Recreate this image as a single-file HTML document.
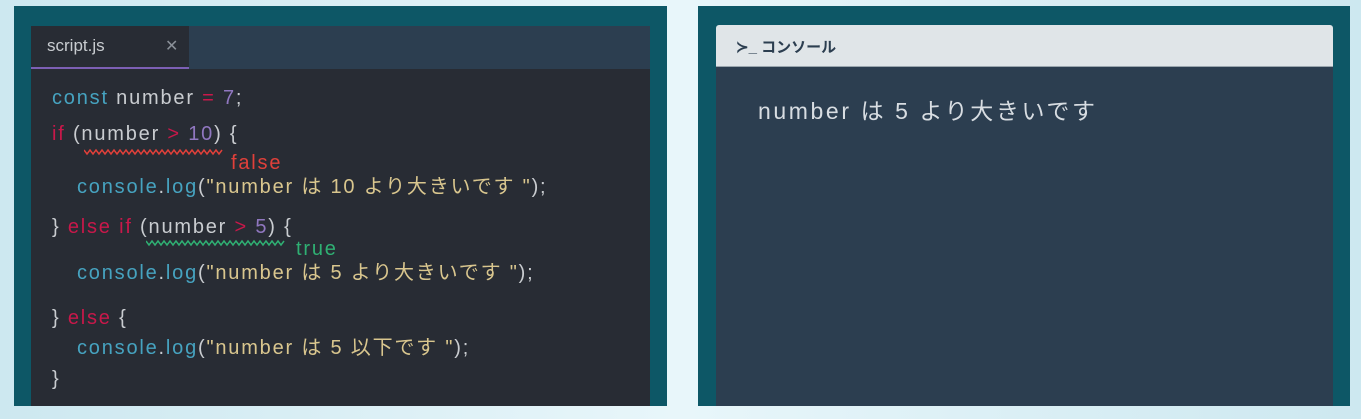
<!DOCTYPE html>
<html><head><meta charset="utf-8"><style>
body{margin:0;width:1361px;height:419px;overflow:hidden;background:linear-gradient(90deg,#cde8f0,#e8f6fa 50%,#cde8f0);font-family:"Liberation Sans","Noto Sans CJK JP",sans-serif;position:relative}
.teal{position:absolute;background:#0d5766;top:6px;height:400px}
.ed{position:absolute;left:31px;top:26px;width:619px;height:380px;background:#282c34}
.tabbar{position:absolute;left:0;top:0;width:619px;height:43px;background:#2c3e50}
.tab{position:absolute;left:0;top:0;width:158px;height:41px;background:#282c34;border-bottom:2px solid #7c5fb4;color:#c8ccd0;font-size:17px}
.l{position:absolute;font-size:20px;letter-spacing:1.8px;white-space:pre;color:#c9ccd0;line-height:24px}
.c{color:#46a3c0}.k{color:#c8184a}.n{color:#9077c0}.s{color:#d9c68e}
</style></head><body>
<div class="teal" style="left:14px;width:653px"></div>
<div class="teal" style="left:698px;width:652px"></div>
<div class="ed">
<div class="tabbar"></div>
<div class="tab"><span style="position:absolute;left:16px;top:10px">script.js</span><span style="position:absolute;left:134px;top:10px;color:#8a9098;font-size:16px">✕</span></div>
</div>
<div class="l" style="left:52px;top:86px"><span class="c">const</span> number <span class="k">=</span> <span class="n">7</span>;</div>
<div class="l" style="left:52px;top:122px"><span class="k">if</span> (number <span class="k">&gt;</span> <span class="n">10</span>) {</div>
<svg style="position:absolute;left:84px;top:148px" width="140" height="8"><polyline fill="none" stroke="#e0403a" stroke-width="1.5" points="0,2 3,6 6,2 9,6 12,2 15,6 18,2 21,6 24,2 27,6 30,2 33,6 36,2 39,6 42,2 45,6 48,2 51,6 54,2 57,6 60,2 63,6 66,2 69,6 72,2 75,6 78,2 81,6 84,2 87,6 90,2 93,6 96,2 99,6 102,2 105,6 108,2 111,6 114,2 117,6 120,2 123,6 126,2 129,6 132,2 135,6 138,2"/></svg>
<div class="l" style="left:231px;top:151px;color:#e0403a">false</div>
<div class="l" style="left:77px;top:175px"><span class="c">console</span>.<span class="c">log</span>(<span class="s">"number は 10 より大きいです "</span>);</div>
<div class="l" style="left:52px;top:215px">} <span class="k">else if</span> (number <span class="k">&gt;</span> <span class="n">5</span>) {</div>
<svg style="position:absolute;left:146px;top:239px" width="140" height="8"><polyline fill="none" stroke="#2fb073" stroke-width="1.5" points="0,2 3,6 6,2 9,6 12,2 15,6 18,2 21,6 24,2 27,6 30,2 33,6 36,2 39,6 42,2 45,6 48,2 51,6 54,2 57,6 60,2 63,6 66,2 69,6 72,2 75,6 78,2 81,6 84,2 87,6 90,2 93,6 96,2 99,6 102,2 105,6 108,2 111,6 114,2 117,6 120,2 123,6 126,2 129,6 132,2 135,6 138,2"/></svg>
<div class="l" style="left:296px;top:237px;color:#2fb073">true</div>
<div class="l" style="left:77px;top:261px"><span class="c">console</span>.<span class="c">log</span>(<span class="s">"number は 5 より大きいです "</span>);</div>
<div class="l" style="left:52px;top:306px">} <span class="k">else</span> {</div>
<div class="l" style="left:77px;top:336px"><span class="c">console</span>.<span class="c">log</span>(<span class="s">"number は 5 以下です "</span>);</div>
<div class="l" style="left:52px;top:367px">}</div>
<div style="position:absolute;left:716px;top:25px;width:617px;height:41px;background:#e0e5e8;border-radius:3px 3px 0 0;border-bottom:1px solid #9aa6ae"></div>
<div style="position:absolute;left:736px;top:36px;font-size:15px;font-weight:bold;color:#2c3e50">≻_ コンソール</div>
<div style="position:absolute;left:716px;top:67px;width:617px;height:339px;background:#2c3e50"></div>
<div class="l" style="left:758px;top:99px;font-size:23px;color:#d8dde2;letter-spacing:2.6px">number は 5 より大きいです</div>
</body></html>
